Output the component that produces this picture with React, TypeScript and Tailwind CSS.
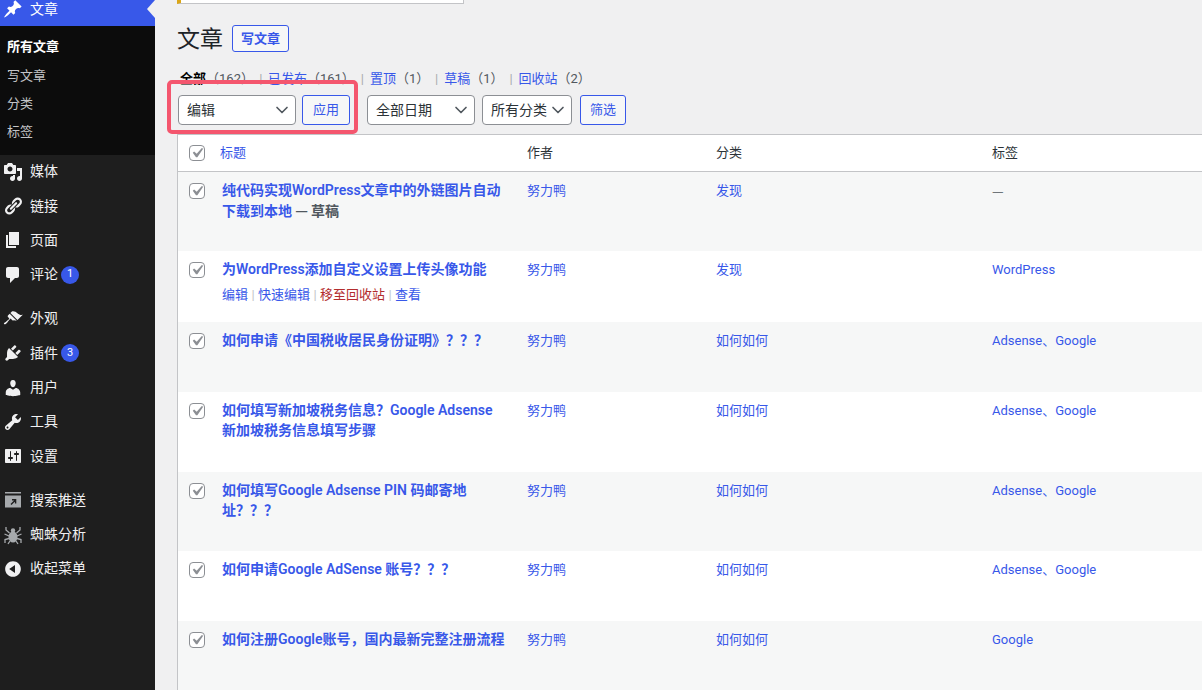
import { ChevronDown } from "lucide-react";
import type { ReactNode } from "react";

const ICONS: Record<string, string> = {
  post: "M10.44 3.02l1.82-1.82 6.36 6.35-1.83 1.82c-1.05-.68-2.48-.57-3.41.36l-.75.75c-.92.93-1.04 2.35-.35 3.41l-1.83 1.82-2.41-2.41-2.8 2.79c-.42.42-3.38 2.71-3.8 2.29s1.86-3.39 2.28-3.81l2.79-2.79L4.1 9.36l1.83-1.82c1.05.69 2.48.57 3.4-.36l.75-.75c.93-.92 1.05-2.35.36-3.41z",
  media: "M13 11V4c0-.55-.45-1-1-1h-1.67L9 1H5L3.67 3H2c-.55 0-1 .45-1 1v7c0 .55.45 1 1 1h10c.55 0 1-.45 1-1zM7 4.5c1.38 0 2.5 1.12 2.5 2.5S8.38 9.5 7 9.5 4.5 8.38 4.5 7 5.62 4.5 7 4.5zM14 6h5v10.5c0 1.38-1.12 2.5-2.5 2.5S14 17.88 14 16.5s1.12-2.5 2.5-2.5c.17 0 .34.02.5.05V9h-3V6zm-4 8.05V13h2v3.5c0 1.38-1.12 2.5-2.5 2.5S7 17.88 7 16.5 8.12 14 9.5 14c.17 0 .34.02.5.05z",
  links: "M17.74 2.76c1.68 1.69 1.68 4.41 0 6.1l-1.53 1.52c-1.12 1.12-2.7 1.47-4.14 1.09l2.62-2.61.76-.77.76-.76c.84-.84.84-2.2 0-3.04-.84-.85-2.2-.85-3.04 0l-.77.76-3.38 3.38c-.37-1.44-.02-3.02 1.1-4.14l1.52-1.53c1.69-1.68 4.42-1.68 6.1 0zM8.59 13.43l5.34-5.34c.42-.42.42-1.1 0-1.52-.44-.43-1.13-.39-1.53 0l-5.33 5.34c-.42.42-.42 1.1 0 1.52.44.43 1.13.39 1.52 0zm-.76 2.29l4.14-4.15c.38 1.44.03 3.02-1.09 4.14l-1.52 1.53c-1.69 1.68-4.41 1.68-6.1 0-1.68-1.68-1.68-4.42 0-6.1l1.53-1.52c1.12-1.12 2.7-1.47 4.14-1.1l-4.14 4.15c-.85.84-.85 2.2 0 3.05.84.84 2.2.84 3.04 0z",
  page: "M6 15V2h10v13H6zm-1 1h8v2H3V5h2v11z",
  comments: "M5 2h9c1.1 0 2 .9 2 2v7c0 1.1-.9 2-2 2h-2l-5 5v-5H5c-1.1 0-2-.9-2-2V4c0-1.1.9-2 2-2z",
  appearance: "M14.48 11.06L7.41 3.99l1.5-1.5c.5-.56 2.3-.47 3.51.32 1.21.8 1.43 1.28 2.91 2.1 1.18.64 2.45 1.26 4.45.85zm-.71.71L6.7 4.7 4.93 6.47c-.39.39-.39 1.02 0 1.41l1.06 1.06c.39.39.39 1.03 0 1.42-.6.6-1.43 1.11-2.21 1.69-.35.26-.7.53-1.01.84C1.43 13.23.4 14.4 1.1 15.1c.7.7 1.87-.33 3.25-1.72.31-.31.58-.66.84-1.01.58-.78 1.09-1.61 1.69-2.21.39-.39 1.03-.39 1.42 0l1.06 1.06c.39.39 1.02.39 1.41 0z",
  plugins: "M13.11 4.36L9.87 7.6 8 5.73l3.24-3.24c.35-.34 1.05-.2 1.56.32.52.51.66 1.21.31 1.55zm-8 1.77l.91-1.12 9.01 9.01-1.19.84c-.71.71-2.63 1.16-3.82 1.16H6.14L4.9 17.26c-.59.59-1.54.59-2.12 0-.59-.58-.59-1.53 0-2.12l1.24-1.24v-3.88c0-1.13.4-3.19 1.09-3.89zm7.26 3.97l3.24-3.24c.34-.35 1.04-.21 1.55.31.52.51.66 1.21.31 1.55l-3.24 3.25z",
  users: "M10 9.25c-2.27 0-2.73-3.44-2.73-3.44C7 4.02 7.82 2 9.97 2c2.16 0 2.98 2.02 2.71 3.81 0 0-.41 3.44-2.68 3.44zm0 2.57L12.72 10c2.39 0 4.52 2.33 4.52 4.53v2.49s-3.65 1.13-7.24 1.13c-3.65 0-7.24-1.13-7.24-1.13v-2.49c0-2.25 1.94-4.48 4.47-4.48z",
  tools: "M16.68 9.77c-1.34 1.34-3.3 1.67-4.95.99l-5.41 6.52c-.99.99-2.59.99-3.58 0s-.99-2.59 0-3.57l6.52-5.42c-.68-1.65-.35-3.61.99-4.95 1.28-1.28 3.12-1.62 4.72-1.06l-2.89 2.89 2.82 2.82 2.86-2.87c.53 1.58.18 3.39-1.08 4.65zM3.81 16.21c.4.39 1.04.39 1.43 0 .4-.4.4-1.04 0-1.43-.39-.4-1.03-.4-1.43 0-.39.39-.39 1.03 0 1.43z",
  settings: "M18 16V4c0-.55-.45-1-1-1H3c-.55 0-1 .45-1 1v12c0 .55.45 1 1 1h14c.55 0 1-.45 1-1zM8 11h1c.55 0 1 .45 1 1s-.45 1-1 1H8v1.5c0 .28-.22.5-.5.5s-.5-.22-.5-.5V13H6c-.55 0-1-.45-1-1s.45-1 1-1h1V5.5c0-.28.22-.5.5-.5s.5.22.5.5V11zm5-2h-1c-.55 0-1-.45-1-1s.45-1 1-1h1V5.5c0-.28.22-.5.5-.5s.5.22.5.5V7h1c.55 0 1 .45 1 1s-.45 1-1 1h-1v5.5c0 .28-.22.5-.5.5s-.5-.22-.5-.5V9z",
  collapse: "M10 2.16c4.33 0 7.84 3.51 7.84 7.84s-3.51 7.84-7.84 7.84S2.16 14.33 2.16 10 5.71 2.16 10 2.16zm2 11.72V6.12L6.18 9.97z",
};

function DashIcon({ name }: { name: string }) {
  return (
    <svg viewBox="0 0 20 20" className="h-5 w-5 fill-[#f0f0f1]">
      <path d={ICONS[name]} />
    </svg>
  );
}

function PushIcon() {
  return (
    <svg viewBox="0 0 16 16" className="ml-[2px] h-[16px] w-[16px]">
      <rect x="0" y="0" width="16" height="1.5" fill="#a7aaad" />
      <rect x="0" y="3.5" width="16" height="12" fill="#a7aaad" />
      <path d="M6 12.5L10 8.5M7 7.8h3.6v3.6" stroke="#1e1e1e" strokeWidth="1.4" fill="none" />
    </svg>
  );
}

function SpiderIcon() {
  return (
    <svg viewBox="0 0 20 20" className="h-5 w-5">
      <ellipse cx="10" cy="12" rx="4.5" ry="5.5" fill="#a7aaad" />
      <circle cx="10" cy="5.5" r="2.2" fill="#a7aaad" />
      <path
        d="M6.5 8L3 5V2M6 11L1.5 9M6 13.5L2 14.5V18M7 16L5 19M13.5 8L17 5V2M14 11L18.5 9M14 13.5L18 14.5V18M13 16L15 19"
        stroke="#a7aaad"
        strokeWidth="1.3"
        fill="none"
      />
    </svg>
  );
}

function MenuRow({ icon, label, badge, className = "" }: { icon: ReactNode; label: string; badge?: number; className?: string }) {
  return (
    <div className={`flex h-[34.3px] items-center pl-[3px] text-[14px] text-[#f0f0f1] ${className}`}>
      <span className="flex w-[27px] shrink-0 justify-start">{icon}</span>
      <span className="whitespace-nowrap">{label}</span>
      {badge !== undefined && (
        <span className="ml-[3px] flex h-[18px] w-[18px] items-center justify-center rounded-full bg-[#3858e9] text-[11px] text-white">
          {badge}
        </span>
      )}
    </div>
  );
}

function Sidebar() {
  return (
    <aside className="w-[155px] shrink-0 bg-[#1e1e1e]">
      <div className="-mt-2">
        <div className="relative flex h-[34px] items-center bg-[#3858e9] pl-[3px] text-[14px] text-white">
          <span className="flex w-[27px] shrink-0">
            <svg viewBox="0 0 20 20" className="h-5 w-5 fill-white">
              <path d={ICONS.post} />
            </svg>
          </span>
          文章
          <span className="absolute right-0 top-[8px] h-0 w-0 border-y-[9px] border-r-[8px] border-y-transparent border-r-[#f0f0f1]" />
        </div>
        <div className="bg-[#0c0c0c] pb-[8.4px] pt-[7px] text-[13px]">
          <div className="flex h-[28.3px] items-center pl-[7px] font-semibold text-white">所有文章</div>
          <div className="flex h-[28.3px] items-center pl-[7px] text-[#c3c4c7]">写文章</div>
          <div className="flex h-[28.3px] items-center pl-[7px] text-[#c3c4c7]">分类</div>
          <div className="flex h-[28.3px] items-center pl-[7px] text-[#c3c4c7]">标签</div>
        </div>
        <MenuRow icon={<DashIcon name="media" />} label="媒体" />
        <MenuRow icon={<DashIcon name="links" />} label="链接" />
        <MenuRow icon={<DashIcon name="page" />} label="页面" />
        <MenuRow icon={<DashIcon name="comments" />} label="评论" badge={1} />
        <MenuRow icon={<DashIcon name="appearance" />} label="外观" className="mt-[10px]" />
        <MenuRow icon={<DashIcon name="plugins" />} label="插件" badge={3} />
        <MenuRow icon={<DashIcon name="users" />} label="用户" />
        <MenuRow icon={<DashIcon name="tools" />} label="工具" />
        <MenuRow icon={<DashIcon name="settings" />} label="设置" />
        <MenuRow icon={<PushIcon />} label="搜索推送" className="mt-[10px]" />
        <MenuRow icon={<SpiderIcon />} label="蜘蛛分析" />
        <MenuRow icon={<DashIcon name="collapse" />} label="收起菜单" />
      </div>
    </aside>
  );
}

function Checkbox() {
  return (
    <span className="flex h-4 w-4 items-center justify-center rounded-[4px] border border-[#8c8f94] bg-white">
      <svg viewBox="0 0 20 20" className="h-5 w-5 shrink-0 fill-[#8c8f94]">
        <path d="M14.83 4.89l1.34.94-5.81 8.38H9.02L5.78 9.67l1.34-1.25 2.57 2.4z" />
      </svg>
    </span>
  );
}

function Select({ label, className }: { label: string; className: string }) {
  return (
    <div className={`flex h-[30px] items-center justify-between rounded-[4px] border border-[#8c8f94] bg-white pl-2 pr-[3px] text-[14px] text-[#2c3338] ${className}`}>
      <span className="whitespace-nowrap">{label}</span>
      <ChevronDown size={20} strokeWidth={2} className="shrink-0 text-[#50575e]" />
    </div>
  );
}

function OutlineButton({ label, className }: { label: string; className: string }) {
  return (
    <div className={`flex h-[30px] items-center justify-center rounded-[3px] border border-[#3858e9] bg-[#f6f7f7] text-[13px] text-[#3858e9] ${className}`}>
      {label}
    </div>
  );
}

type Post = {
  title: string;
  draft?: boolean;
  category: string;
  tags: string;
  height: string;
  shaded: boolean;
  actions?: boolean;
};

const POSTS: Post[] = [
  { title: "纯代码实现WordPress文章中的外链图片自动下载到本地", draft: true, category: "发现", tags: "—", height: "h-[79px]", shaded: true },
  { title: "为WordPress添加自定义设置上传头像功能", category: "发现", tags: "WordPress", height: "h-[71px]", shaded: false, actions: true },
  { title: "如何申请《中国税收居民身份证明》？？？", category: "如何如何", tags: "Adsense、Google", height: "h-[70px]", shaded: true },
  { title: "如何填写新加坡税务信息？Google Adsense 新加坡税务信息填写步骤", category: "如何如何", tags: "Adsense、Google", height: "h-[80px]", shaded: false },
  { title: "如何填写Google Adsense PIN 码邮寄地址？？？", category: "如何如何", tags: "Adsense、Google", height: "h-[79px]", shaded: true },
  { title: "如何申请Google AdSense 账号？？？", category: "如何如何", tags: "Adsense、Google", height: "h-[70px]", shaded: false },
  { title: "如何注册Google账号，国内最新完整注册流程", category: "如何如何", tags: "Google", height: "h-[70px]", shaded: true },
];

function Sep() {
  return <span className="w-[10px] text-center text-[#c3c4c7]">|</span>;
}

function PostRow({ post }: { post: Post }) {
  const isEmptyTag = post.tags === "—";
  return (
    <div className={`flex items-start pt-[8px] ${post.height} ${post.shaded ? "bg-[#f6f7f7]" : "bg-white"}`}>
      <div className="w-[44px] shrink-0 pl-[11px] pt-[3px]">
        <Checkbox />
      </div>
      <div className="w-[305px] shrink-0 pr-[20px] text-[14px] leading-[20px] text-[#3858e9]">
        <span className="font-semibold">{post.title}</span>
        {post.draft && <span className="font-['Noto_Sans_CJK_SC',sans-serif] font-semibold text-[#50575e]"> — 草稿</span>}
        {post.actions && (
          <div className="mt-[6px] flex items-center text-[13px] font-normal">
            <span>编辑</span>
            <Sep />
            <span>快速编辑</span>
            <Sep />
            <span className="text-[#b32d2e]">移至回收站</span>
            <Sep />
            <span>查看</span>
          </div>
        )}
      </div>
      <div className="w-[189px] shrink-0 pt-[1px] text-[13px] leading-[20px] text-[#3858e9]">努力鸭</div>
      <div className="w-[276px] shrink-0 pt-[1px] text-[13px] leading-[20px] text-[#3858e9]">{post.category}</div>
      <div className={`pt-[1px] text-[13px] leading-[20px] ${isEmptyTag ? "font-['Noto_Sans_CJK_SC',sans-serif] text-[#50575e]" : "text-[#3858e9]"}`}>
        {post.tags}
      </div>
    </div>
  );
}

function SubNav() {
  const items = [
    { label: "已发布", count: "（161）", sep: "w-[14px]" },
    { label: "置顶", count: "（1）", sep: "w-[15px]" },
    { label: "草稿", count: "（1）", sep: "w-[15px]" },
    { label: "回收站", count: "（2）", sep: "w-[15px]" },
  ];
  return (
    <div className="mt-[17px] flex h-[20px] items-center pl-[3px] text-[13px] leading-[20px] text-[#50575e]">
      <span className="font-semibold text-black">全部</span>
      <span>（162）</span>
      {items.map((item) => (
        <span key={item.label} className="flex items-center">
          <span className={`text-center text-[#a7aaad] ${item.sep}`}>|</span>
          <span className="text-[#3858e9]">{item.label}</span>
          <span>{item.count}</span>
        </span>
      ))}
    </div>
  );
}

export default function App() {
  return (
    <div className="relative flex h-[690px] w-[1202px] overflow-hidden bg-[#f0f0f1] font-['Roboto','Noto_Sans_CJK_SC',sans-serif]">
      <Sidebar />
      <main className="min-w-0 flex-1 pl-[22px]">
        <div className="h-[4px] w-[287px] border-b border-l-4 border-r border-[#c3c4c7] border-l-[#dba617] bg-white" />
        <div className="mt-[21px] flex items-center">
          <h1 className="h-[27px] text-[23px] leading-[29px] text-[#1d2327]">文章</h1>
          <div className="ml-[9px] flex h-[27px] w-[57px] items-center justify-center rounded-[3px] border border-[#3858e9] bg-[#f6f7f7] text-[13px] font-semibold text-[#3858e9]">
            写文章
          </div>
        </div>
        <SubNav />
        <div className="mt-[6px] flex items-center pl-[1px]">
          <Select label="编辑" className="w-[118px]" />
          <OutlineButton label="应用" className="ml-[6px] w-[48px]" />
          <Select label="全部日期" className="ml-[17px] w-[108px]" />
          <Select label="所有分类" className="ml-[7px] w-[90px]" />
          <OutlineButton label="筛选" className="ml-[8px] w-[46px]" />
        </div>
        <div className="mt-[9px] border-l border-t border-[#c3c4c7] bg-white">
          <div className="flex h-[37px] items-center border-b border-[#c3c4c7] text-[13px]">
            <div className="w-[42px] shrink-0 pl-[11px]">
              <Checkbox />
            </div>
            <div className="w-[307px] shrink-0 text-[#3858e9]">标题</div>
            <div className="w-[189px] shrink-0 text-[#2c3338]">作者</div>
            <div className="w-[276px] shrink-0 text-[#2c3338]">分类</div>
            <div className="text-[#2c3338]">标签</div>
          </div>
          {POSTS.map((post) => (
            <PostRow key={post.title} post={post} />
          ))}
        </div>
      </main>
      <div className="absolute left-[167px] top-[80px] h-[54px] w-[191px] rounded-[5px] border-4 border-[#f4566e]" />
    </div>
  );
}
